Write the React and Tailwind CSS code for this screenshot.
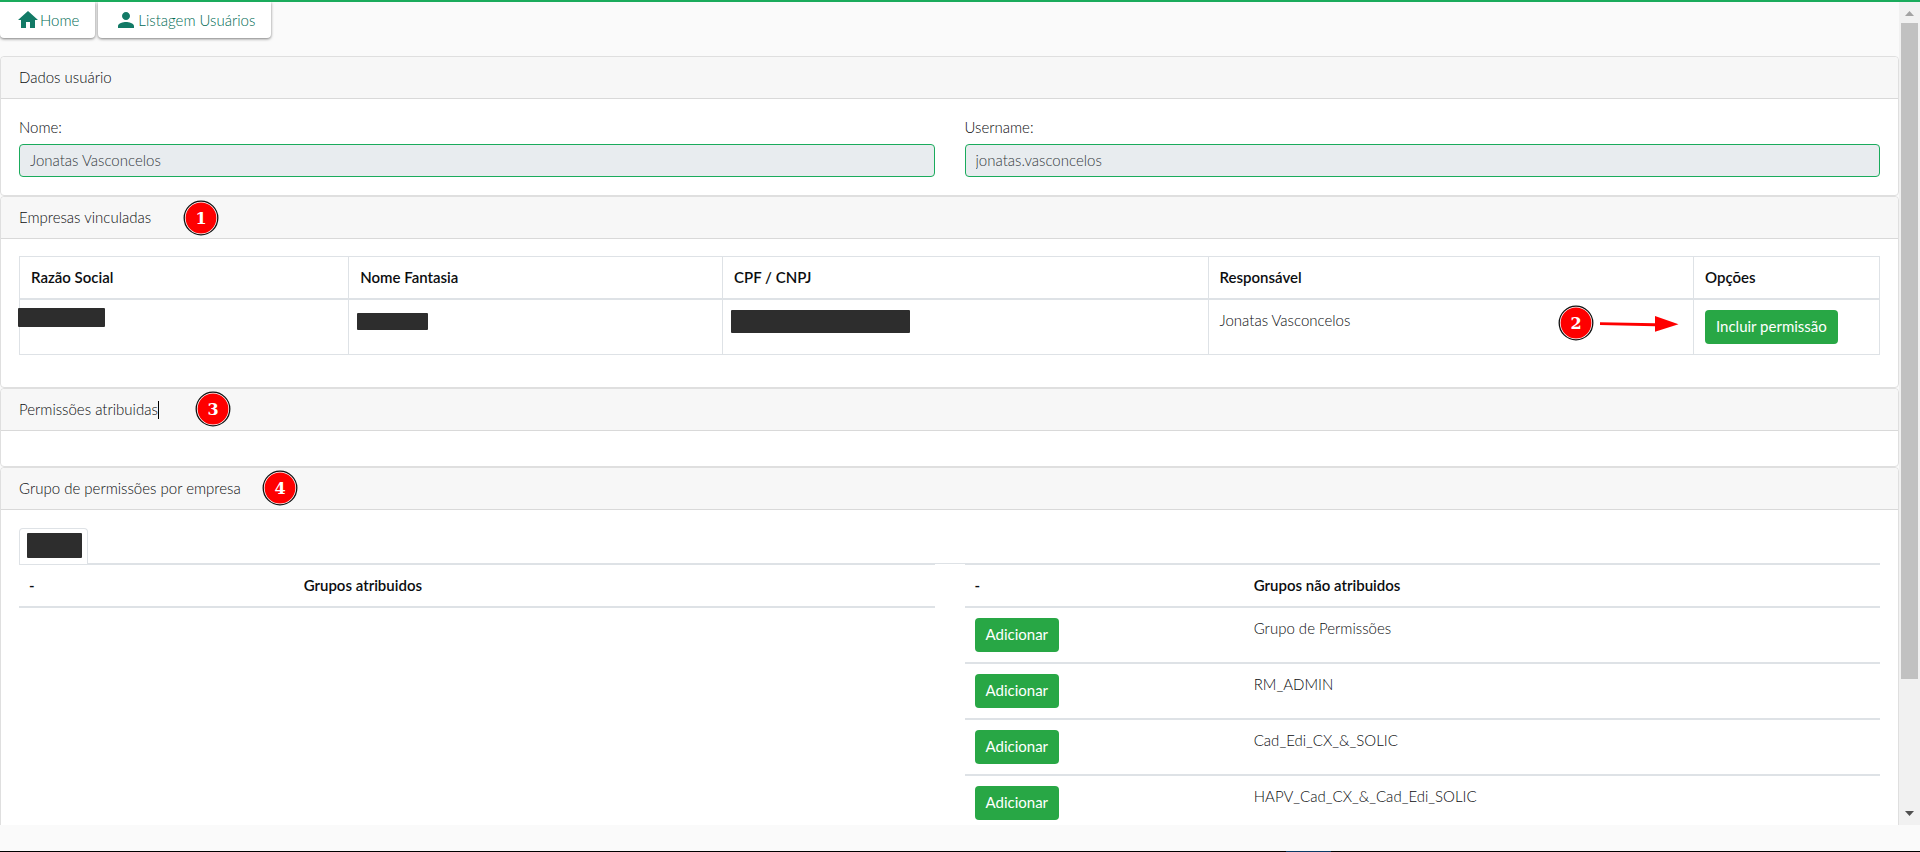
import React from "react";
import { MdHome, MdPerson } from "react-icons/md";

const groups = [
  "Grupo de Permissões",
  "RM_ADMIN",
  "Cad_Edi_CX_&_SOLIC",
  "HAPV_Cad_CX_&_Cad_Edi_SOLIC",
];

function Badge({ n, className }) {
  return (
    <svg className={`absolute size-9 ${className}`} viewBox="0 0 36 36" aria-hidden="true">
      <circle cx="18" cy="18" r="16.8" fill="#fff" stroke="#111" strokeWidth="1.3" />
      <circle cx="18" cy="18" r="15.4" fill="#fe0000" />
      <text
        x="18"
        y="24"
        textAnchor="middle"
        fill="#fff"
        fontFamily="'DejaVu Serif', serif"
        fontWeight="700"
        fontSize="16"
      >
        {n}
      </text>
    </svg>
  );
}

function NavTab({ icon: Icon, children }) {
  return (
    <a
      href="#"
      className="flex h-9 items-center rounded-b bg-white px-4 text-[#006b54] shadow-[0_1px_3px_rgba(0,0,0,0.5)]"
    >
      <Icon className="size-6 text-[#127a66]" />
      {children}
    </a>
  );
}

function Card({ title, badge, caret, bodyClass, children }) {
  return (
    <section className="rounded border border-[#dfdfdf] bg-white">
      <h2 className="relative flex h-[42px] items-center rounded-t border-b border-[#d9d9d9] bg-[#f7f7f7] px-[18px]">
        {title}
        {caret && <span className="h-[18px] w-px bg-black" />}
        {badge}
      </h2>
      <div className={bodyClass}>{children}</div>
    </section>
  );
}

function Field({ id, label, value }) {
  return (
    <div>
      <label htmlFor={id} className="mb-[7px] block leading-5">
        {label}
      </label>
      <input
        id={id}
        readOnly
        value={value}
        className="block h-[33px] w-full rounded border border-[#1aab5c] bg-[#e8ecef] px-[10px] pb-[2px] text-[#343a40] outline-none"
      />
    </div>
  );
}

function GreenButton({ children }) {
  return (
    <button
      type="button"
      className="block h-[34px] rounded bg-[#28a745] px-[11px] pb-[2px] font-normal whitespace-nowrap text-white"
    >
      {children}
    </button>
  );
}

function GroupTable({ title, rows, firstCol }) {
  return (
    <table className="w-full table-fixed border-separate border-spacing-0 border-t border-[#dee2e6] text-left align-top">
      <thead>
        <tr>
          <th className={`border-b-2 border-[#dee2e6] p-[10px] font-semibold ${firstCol}`}>-</th>
          <th className="border-b-2 border-[#dee2e6] p-[10px] font-semibold">{title}</th>
        </tr>
      </thead>
      <tbody>
        {rows.map((name) => (
          <tr key={name} className="align-top">
            <td className="border-b-2 border-[#dee2e6] p-[10px]">
              <GreenButton>Adicionar</GreenButton>
            </td>
            <td className="border-b-2 border-[#dee2e6] p-[10px]">{name}</td>
          </tr>
        ))}
      </tbody>
    </table>
  );
}

const cell = "relative border-r border-[#dee2e6] px-[11px] py-[10px]";

export default function App() {
  return (
    <div className="flex h-screen flex-col bg-[#fafafa] font-['Lato',sans-serif] text-[15px] leading-[21px] font-light text-[#0b0d0f]">
      <div className="h-[2px] shrink-0 bg-[#1aab5c]" />
      <div className="flex min-h-0 flex-1">
        <main className="min-w-0 flex-1 overflow-hidden">
          <nav className="mb-[18px] flex gap-[3px]">
            <NavTab icon={MdHome}>Home</NavTab>
            <NavTab icon={MdPerson}>Listagem Usuários</NavTab>
          </nav>

          <Card title="Dados usuário" bodyClass="grid grid-cols-2 gap-[30px] p-[18px]">
            <Field id="nome" label="Nome:" value="Jonatas Vasconcelos" />
            <Field id="username" label="Username:" value="jonatas.vasconcelos" />
          </Card>

          <Card
            title="Empresas vinculadas"
            badge={<Badge n={1} className="top-[3px] left-[182px]" />}
            bodyClass="px-[18px] pt-[17px] pb-8"
          >
            <table className="w-full table-fixed border-separate border-spacing-0 border-t border-l border-[#dee2e6] text-left">
              <colgroup>
                <col className="w-[17.7%]" />
                <col className="w-[20.1%]" />
                <col className="w-[26.1%]" />
                <col className="w-[26.1%]" />
                <col />
              </colgroup>
              <thead>
                <tr>
                  {["Razão Social", "Nome Fantasia", "CPF / CNPJ", "Responsável", "Opções"].map((h) => (
                    <th key={h} className={`${cell} border-b-2 font-semibold`}>
                      {h}
                    </th>
                  ))}
                </tr>
              </thead>
              <tbody>
                <tr className="align-top">
                  <td className={`${cell} border-b`}>
                    <span className="absolute top-2 -left-[2px] h-[19px] w-[87px] rounded-[1px] bg-[#2d2d2d]" />
                  </td>
                  <td className={`${cell} border-b`}>
                    <span className="absolute top-[13px] left-2 h-[17px] w-[71px] rounded-[1px] bg-[#2d2d2d]" />
                  </td>
                  <td className={`${cell} border-b`}>
                    <span className="absolute top-[10px] left-2 h-[23px] w-[179px] rounded-[1px] bg-[#2d2d2d]" />
                  </td>
                  <td className={`${cell} border-b`}>
                    Jonatas Vasconcelos
                    <Badge n={2} className="top-[5px] right-[99px]" />
                    <svg
                      className="absolute top-[16px] right-[14px] h-4 w-20"
                      viewBox="0 0 80 16"
                      aria-hidden="true"
                    >
                      <path d="M1 6.3 56 7.2V0L79.500 8.200 56 15.800V10.200L1 9z" fill="#fe0000" />
                    </svg>
                  </td>
                  <td className={`${cell} border-b`}>
                    <GreenButton>Incluir permissão</GreenButton>
                  </td>
                </tr>
              </tbody>
            </table>
          </Card>

          <Card
            title="Permissões atribuidas"
            caret
            badge={<Badge n={3} className="top-[2px] left-[194px]" />}
            bodyClass="h-[35px]"
          />

          <Card
            title="Grupo de permissões por empresa"
            badge={<Badge n={4} className="top-[2px] left-[261px]" />}
            bodyClass="p-[18px]"
          >
            <div className="flex border-b border-[#dee2e6]">
              <button
                type="button"
                aria-label="Empresa"
                className="-mb-px h-9 rounded-t border border-b-0 border-[#dee2e6] bg-white pr-[5px] pb-[2px] pl-[7px]"
              >
                <span className="block h-[25px] w-[55px] rounded-[1px] bg-[#2d2d2d]" />
              </button>
            </div>
            <div className="grid grid-cols-2 gap-[30px]">
              <div>
                <GroupTable title="Grupos atribuidos" rows={[]} firstCol="w-[30%]" />
              </div>
              <div>
                <GroupTable title="Grupos não atribuidos" rows={groups} firstCol="w-[30.5%]" />
              </div>
            </div>
          </Card>
        </main>

        <div className="flex w-[21px] shrink-0 flex-col items-center bg-[#f1f1f1]" aria-hidden="true">
          <svg className="h-[21px] w-[9px] shrink-0" viewBox="0 0 9 21">
            <path d="M0 14 4.500 9 9 14z" fill="#a3a3a3" />
          </svg>
          <div className="flex min-h-0 w-[17px] flex-1 flex-col">
            <div className="h-[84%] bg-[#c1c1c1]" />
          </div>
          <svg className="h-[21px] w-[9px] shrink-0" viewBox="0 0 9 21">
            <path d="M0 7h9L4.500 12z" fill="#505050" />
          </svg>
        </div>
      </div>
      <footer className="flex h-[27px] shrink-0 items-end">
        <div className="flex h-px w-full bg-black">
          <div className="ml-[67%] h-px w-[45px] bg-[#0b3a66]" />
        </div>
      </footer>
    </div>
  );
}
